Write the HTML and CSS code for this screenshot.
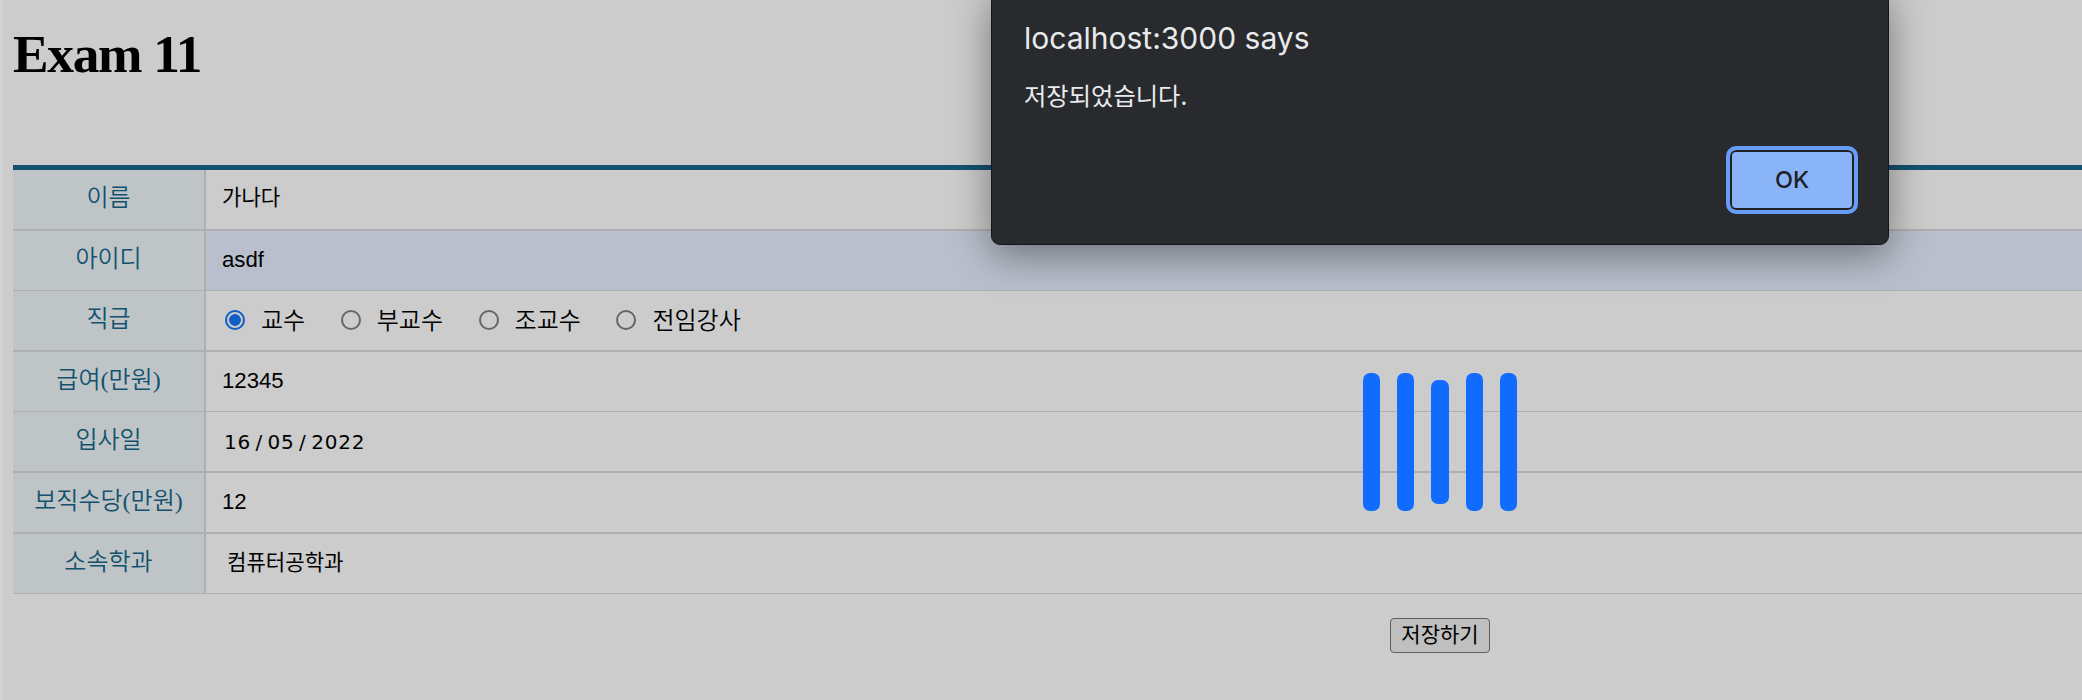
FILE: index.html
```html
<!DOCTYPE html>
<html lang="ko">
<head>
<meta charset="utf-8">
<title>Exam 11</title>
<link rel="stylesheet" href="styles.css">
</head>
<body>
<main class="page">
  <h1 class="title">Exam 11</h1>
  <form class="form">
    <div class="row"><div class="label">이름</div><div class="field"><span class="value ko">가나다</span></div></div>
    <div class="row thin"><div class="label">아이디</div><div class="field autofill"><span class="value">asdf</span></div></div>
    <div class="row"><div class="label">직급</div><div class="field radios">
      <label class="option"><i class="radio checked"></i>교수</label>
      <label class="option"><i class="radio"></i>부교수</label>
      <label class="option"><i class="radio"></i>조교수</label>
      <label class="option"><i class="radio"></i>전임강사</label>
    </div></div>
    <div class="row thin"><div class="label">급여(만원)</div><div class="field"><span class="value">12345</span></div></div>
    <div class="row"><div class="label">입사일</div><div class="field"><span class="value date">16<b>/</b>05<b>/</b>2022</span></div></div>
    <div class="row"><div class="label">보직수당(만원)</div><div class="field"><span class="value">12</span></div></div>
    <div class="row thin"><div class="label">소속학과</div><div class="field"><span class="value ko select">컴퓨터공학과</span></div></div>
  </form>
  <div class="actions"><button class="save">저장하기</button></div>
</main>
<div class="loader"><i></i><i></i><i class="short"></i><i></i><i></i></div>
<section class="dialog">
  <h2 class="dialog-title">localhost:3000 says</h2>
  <p class="dialog-text">저장되었습니다.</p>
  <button class="ok">OK</button>
</section>
</body>
</html>
```
FILE: styles.css
```css
* { box-sizing: border-box; }
html { height: 100%; overflow: hidden; }
body {
  margin: 0;
  height: 700px;
  overflow: hidden;
  position: relative;
  background: #ccc;
  border-left: 2px solid #d4d4d4;
  color: #000;
  font-family: "Liberation Serif", "Noto Sans CJK KR", serif;
}
.page { padding: 26px 0 0 11px; }
.title { margin: 0 0 83px; height: 56px; font-size: 53.4px; line-height: 56px; font-weight: 700; letter-spacing: -1.3px; }
.form { border-top: 5px solid #12526e; }
.row { display: grid; grid-template-columns: 193px 1fr; height: 61px; border-bottom: 2px solid #afafaf; }
.row.thin { height: 60px; border-bottom-width: 1px; }
.label {
  display: flex; align-items: center; justify-content: center;
  padding-bottom: 4px;
  border-right: 2px solid #afafaf;
  background: #bfc4c7;
  color: #12526e;
  font-size: 24px; font-weight: 350; line-height: 30px;
}
.field { display: flex; align-items: center; padding-left: 16px; }
.autofill { background: #b9bfcc; }
.value { padding-bottom: 2px; font: 22.2px/30px "Liberation Sans", "Noto Sans CJK KR", sans-serif; }
.value.ko { font-size: 21.1px; padding-bottom: 4px; }
.value.select { padding-left: 5px; padding-bottom: 2px; }
.value.date { font: 20px/30px "DejaVu Sans", sans-serif; letter-spacing: 0.8px; padding: 0 0 0 2px; }
.date b { display: inline-block; width: 16.5px; text-align: center; font-weight: 400; }
.radios { gap: 35.6px; padding-left: 19px; }
.option { display: flex; align-items: center; gap: 16px; font-size: 24px; font-weight: 350; line-height: 30px; }
.radio { flex: none; width: 20px; height: 20px; margin-top: -2px; border: 2px solid #666; border-radius: 50%; }
.radio.checked { border-color: #105dc8; background: radial-gradient(circle, #105dc8 5.5px, transparent 6.2px); }
.actions { padding: 24px 0 0 1377px; }
.save {
  display: block; width: 100px; height: 35px; padding: 0 0 5px;
  border: 1px solid #5e5e5e; border-radius: 4px;
  background: #bfbfbf; color: #000;
  font: 21px/26px "Noto Sans CJK KR", sans-serif;
}
.loader { position: absolute; left: 1360.8px; top: 373px; height: 138px; display: flex; align-items: center; gap: 17.15px; }
.loader i { width: 17.15px; height: 138px; border-radius: 7px; background: #126bff; }
.loader .short { height: 124px; }
.dialog {
  position: absolute; left: 989px; top: -12px; width: 898px; height: 257px;
  padding: 30px 30px 0 32px;
  display: flex; flex-direction: column;
  border: 1px solid #141517; border-radius: 9px;
  background: #292a2d; color: #e8eaed;
  box-shadow: 0 10px 40px rgba(0, 0, 0, .42);
}
.dialog-title { margin: 0; font: 400 30px/38px Inter, sans-serif; }
.dialog-text { margin: 19px 0 0; font: 24.3px/38px "Noto Sans CJK KR", sans-serif; }
.ok {
  align-self: flex-end; width: 132px; height: 68px; margin-top: 32px; padding: 0;
  border: 4px solid #669df6; border-radius: 10px;
  background: #8ab4f8; box-shadow: inset 0 0 0 2px #202124;
  color: #202124; font: 500 23.5px/56px Inter, sans-serif;
}
```
